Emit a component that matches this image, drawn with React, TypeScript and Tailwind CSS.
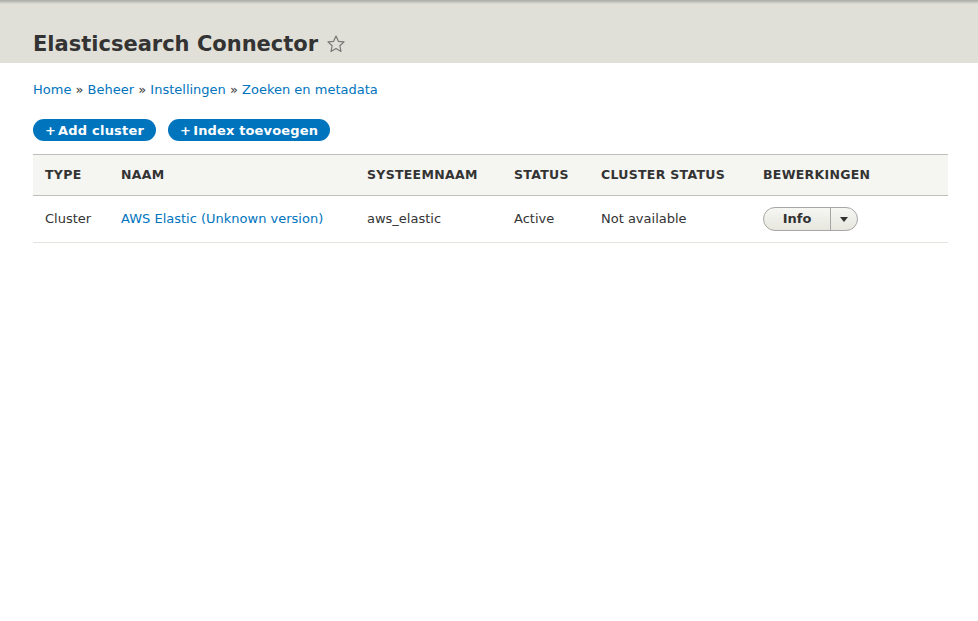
import React from 'react';

const cols = [
  { label: 'Type', w: 'w-[76px]' },
  { label: 'Naam', w: 'w-[246px]' },
  { label: 'Systeemnaam', w: 'w-[147px]' },
  { label: 'Status', w: 'w-[87px]' },
  { label: 'Cluster status', w: 'w-[162px]' },
  { label: 'Bewerkingen', w: '' },
];

const App: React.FC = () => {
  return (
    <div className="min-h-[621px] bg-white text-[#333] font-['DejaVu_Sans',sans-serif]">
      {/* header */}
      <div className="bg-[#e0e0d8] bg-gradient-to-b from-[#a8a8a4] via-[#e0e0d8] via-[4px] to-[#e0e0d8] h-[63px] px-[33px] pt-[30px]">
        <h1 className="flex items-center text-[21px] leading-[28px] font-bold text-[#333]">
          Elasticsearch Connector
          <svg viewBox="0 0 24 24" className="ml-[8px] w-[20px] h-[20px]" fill="none" stroke="#777" strokeWidth="1.4" strokeLinejoin="round">
            <path d="M12 2.5l2.9 6.3 6.8.7-5.1 4.6 1.4 6.8L12 17.4l-6 3.5 1.4-6.8-5.1-4.6 6.8-.7z" />
          </svg>
        </h1>
      </div>

      <div className="pl-[33px] pr-[30px]">
        {/* breadcrumb */}
        <div className="pt-[18px] text-[13px] leading-[18px] text-[#333]">
          <a className="text-[#0074bd]">Home</a> » <a className="text-[#0074bd]">Beheer</a> »{' '}
          <a className="text-[#0074bd]">Instellingen</a> » <a className="text-[#0074bd]">Zoeken en metadata</a>
        </div>

        {/* action buttons */}
        <div className="flex gap-[12px] mt-[20px]">
          <button className="h-[22px] px-[12px] pt-[1px] rounded-full bg-[#0074bd] text-white text-[13px] tracking-[0.2px] font-bold leading-[22px] flex items-center">
            <span className="mr-[2px]">+</span>Add cluster
          </button>
          <button className="h-[22px] px-[12px] pt-[1px] rounded-full bg-[#0074bd] text-white text-[13px] tracking-[0.15px] font-bold leading-[22px] flex items-center">
            <span className="mr-[2px]">+</span>Index toevoegen
          </button>
        </div>

        {/* table */}
        <table className="w-full mt-[13px] border-collapse text-[13px]">
          <thead>
            <tr className="bg-[#f5f5f2] border-t border-t-[#bfbfba] border-b border-b-[#bfbfba]">
              {cols.map((c) => (
                <th key={c.label} className={`${c.w} h-[41px] px-[12px] text-left uppercase font-bold text-[12.5px] tracking-[0.3px] text-[#333]`}>
                  {c.label}
                </th>
              ))}
            </tr>
          </thead>
          <tbody>
            <tr className="border-b border-b-[#e6e4df]">
              <td className="h-[47px] px-[12px]">Cluster</td>
              <td className="px-[12px]">
                <a className="text-[#0074bd]">AWS Elastic (Unknown version)</a>
              </td>
              <td className="px-[12px]">aws_elastic</td>
              <td className="px-[12px]">Active</td>
              <td className="px-[12px]">Not available</td>
              <td className="px-[12px]">
                <div className="inline-flex h-[24px] rounded-full border border-[#a6a6a6] bg-gradient-to-b from-[#f6f6f3] to-[#e7e7df] overflow-hidden">
                  <span className="w-[67px] flex items-center justify-center font-bold text-[13px] text-[#333] border-r border-r-[#a6a6a6]">
                    Info
                  </span>
                  <span className="w-[26px] flex items-center justify-center">
                    <svg viewBox="0 0 8 5" className="w-[8px] h-[5px]">
                      <path d="M0 0h8L4 5z" fill="#333" />
                    </svg>
                  </span>
                </div>
              </td>
            </tr>
          </tbody>
        </table>
      </div>
    </div>
  );
};

export default App;
